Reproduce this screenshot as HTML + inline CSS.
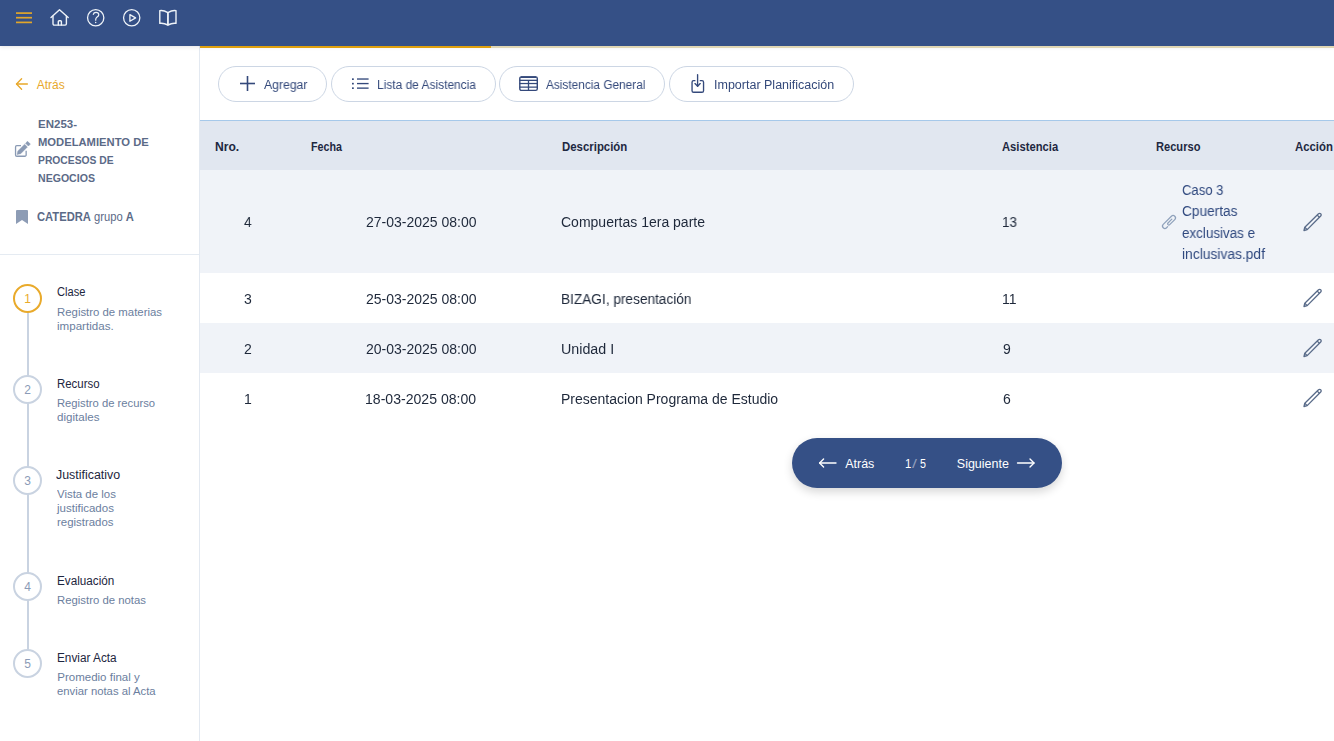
<!DOCTYPE html>
<html><head><meta charset="utf-8">
<style>
*{box-sizing:border-box;margin:0;padding:0}
html,body{width:1334px;height:741px;overflow:hidden;background:#fff;font-family:"Liberation Sans",sans-serif}
.a{position:absolute}
.t{position:absolute;white-space:nowrap;line-height:20px;font-size:12px}
#hdr{left:0;top:0;width:1334px;height:46px;background:#355086;box-shadow:0 1px 4px rgba(40,40,40,.12);z-index:2}
#side{left:0;top:46px;width:200px;height:695px;border-right:1px solid #e3e9f1;background:#fff}
.btn{position:absolute;top:66px;height:36px;border:1px solid #ccd6e4;border-radius:18px;background:#fff}
.circ{position:absolute;left:13px;width:29px;height:29px;border-radius:50%;border:2px solid #c9d3e1;background:#fff;color:#8b9bb7;font-size:12px;text-align:center;line-height:26.5px}
</style></head><body>
<!-- header -->
<div id="hdr" class="a"></div>
<div class="a" style="left:200px;top:46px;width:1134px;height:2px;background:#e0d6b3;z-index:3"></div>
<div class="a" style="left:200px;top:46px;width:291px;height:2px;background:#dfa00d;z-index:3"></div>
<svg class="a" style="left:0;top:0;z-index:4" width="200" height="46" viewBox="0 0 200 46">
  <g stroke="#e2a62a" stroke-width="1.7" fill="none">
    <line x1="16" y1="13.1" x2="32" y2="13.1"/><line x1="16" y1="17.7" x2="32" y2="17.7"/><line x1="16" y1="22.4" x2="32" y2="22.4"/>
  </g>
  <g stroke="#eef3f8" stroke-width="1.4" fill="none" stroke-linejoin="round" stroke-linecap="round">
    <path d="M51 17.6 L59.5 9.8 L68.2 17.6"/>
    <path d="M53 16.2 V23.8 a1.3 1.3 0 0 0 1.3 1.3 H65.1 a1.3 1.3 0 0 0 1.3 -1.3 V16.2"/>
    <path d="M58.3 25 V21.6 a.8 .8 0 0 1 .8 -.8 H60.6 a.8 .8 0 0 1 .8 .8 V25"/>
    <circle cx="95.7" cy="17.7" r="8.15" stroke-width="1.3"/>
    <path d="M93.3 14.4 C93.6 12.9 94.8 12.4 96 12.4 C97.6 12.4 98.8 13.4 98.8 14.8 C98.8 16.4 97.2 16.9 96.3 17.8 C95.8 18.3 95.7 19 95.7 20.2" stroke-width="1.2"/>
    <circle cx="131.7" cy="17.7" r="8.15" stroke-width="1.3"/>
    <path d="M129.9 14.6 L135.6 17.9 L129.9 21.2 Z" stroke-width="1.3"/>
    <path d="M159.8 10.6 Q163.5 10 167.9 12.6 V25 Q163.5 22.8 159.8 23.4 Z"/>
    <path d="M176 10.6 Q172.3 10 167.9 12.6 V25 Q172.3 22.8 176 23.4 Z"/>
  </g>
  <circle cx="95.7" cy="22.6" r=".75" fill="#eef3f8"/>
</svg>

<!-- sidebar -->
<div id="side" class="a"></div>
<svg class="a" style="left:14px;top:76px" width="16" height="16" viewBox="0 0 16 16"><g stroke="#e8a82a" stroke-width="1.3" fill="none" stroke-linecap="round" stroke-linejoin="round"><path d="M13.4 8 H2.5"/><path d="M7.6 2.7 L2.5 8 L7.6 13.3"/></g></svg>
<svg class="a" style="left:14px;top:141px" width="18" height="18" viewBox="0 0 18 18"><path d="M7 4.65 H2.8 a1.25 1.25 0 0 0 -1.25 1.25 V14 a1.25 1.25 0 0 0 1.25 1.25 H10.9 a1.25 1.25 0 0 0 1.25 -1.25 V9.7" fill="none" stroke="#8a9ab4" stroke-width="1.3"/><path d="M3 13.6 L3.89 9.89 L10.59 3.19 L13.41 6.01 L6.71 12.71 Z" fill="#8a9ab4" stroke="#8a9ab4" stroke-width=".4" stroke-linejoin="round"/><path d="M11.6 2.2 L13.5 0.3 L16.3 3.1 L14.4 5 Z" fill="#8a9ab4" stroke="#8a9ab4" stroke-width=".6" stroke-linejoin="round"/></svg>
<svg class="a" style="left:16px;top:210px" width="12" height="14" viewBox="0 0 12 14"><path d="M1 0 H11 a1 1 0 0 1 1 1 V14 L6 10 L0 14 V1 a1 1 0 0 1 1 -1Z" fill="#8d9cb5"/></svg>
<div class="a" style="left:0;top:254px;width:199px;height:1px;background:#e5ebf2"></div>
<div class="a" style="left:27px;top:300px;width:2px;height:360px;background:#c9d3e1"></div>
<div class="circ" style="top:283.5px;border-color:#e9aa2b;color:#e9aa2b">1</div>
<div class="circ" style="top:374.5px">2</div>
<div class="circ" style="top:466px">3</div>
<div class="circ" style="top:571.5px">4</div>
<div class="circ" style="top:649px">5</div>

<!-- toolbar -->
<div class="btn" style="left:218px;width:109px"></div>
<div class="btn" style="left:331px;width:165px"></div>
<div class="btn" style="left:499px;width:166px"></div>
<div class="btn" style="left:669px;width:185px"></div>
<svg class="a" style="left:239px;top:75px" width="17" height="17" viewBox="0 0 17 17"><g stroke="#34497b" stroke-width="1.6"><line x1="8.5" y1="1" x2="8.5" y2="16"/><line x1="1" y1="8.5" x2="16" y2="8.5"/></g></svg>
<svg class="a" style="left:351px;top:76px" width="19" height="15" viewBox="0 0 19 15"><g fill="#34497b"><rect x="1" y="2.2" width="1.8" height="1.7" rx=".5"/><rect x="1" y="6.75" width="1.8" height="1.7" rx=".5"/><rect x="1" y="11.3" width="1.8" height="1.7" rx=".5"/><rect x="6" y="2.35" width="11.6" height="1.35"/><rect x="6" y="6.9" width="11.6" height="1.35"/><rect x="6" y="11.45" width="11.6" height="1.35"/></g></svg>
<svg class="a" style="left:519px;top:76px" width="20" height="16" viewBox="0 0 20 16"><rect x="0.8" y="0.9" width="17.5" height="13.5" rx="1.6" fill="none" stroke="#34497b" stroke-width="1.4"/><g fill="#34497b"><rect x="1.8" y="0.3" width="15.4" height="1.7"/><rect x="0.5" y="3.7" width="18" height="1.3"/><rect x="0.5" y="6.9" width="18" height="1.25"/><rect x="0.5" y="10.5" width="18" height="1.25"/><rect x="8.85" y="4" width="1.3" height="10.5"/></g></svg>
<svg class="a" style="left:689px;top:73px" width="17" height="21" viewBox="0 0 17 21"><g fill="none" stroke="#34497b" stroke-width="1.35" stroke-linecap="round" stroke-linejoin="round"><path d="M5.9 7.65 H4.6 a1.55 1.55 0 0 0 -1.55 1.55 V17.7 a1.55 1.55 0 0 0 1.55 1.55 H13 a1.55 1.55 0 0 0 1.55 -1.55 V9.2 a1.55 1.55 0 0 0 -1.55 -1.55 H11.3"/><path d="M8.6 1.7 V13.2"/><path d="M6 10.6 L8.6 13.2 L11.2 10.6"/></g></svg>

<!-- table -->
<div class="a" style="left:200px;top:120px;width:1134px;height:1px;background:#a6c9ea"></div>
<div class="a" style="left:200px;top:121px;width:1134px;height:49px;background:#e1e7f0"></div>
<div class="a" style="left:200px;top:170px;width:1134px;height:103px;background:#f0f3f8"></div>
<div class="a" style="left:200px;top:323px;width:1134px;height:50px;background:#f0f3f8"></div>
<svg class="a" style="left:1159px;top:212px" width="20" height="20" viewBox="0 0 20 20"><g transform="translate(10,10) rotate(45) scale(1.18)" fill="none" stroke="#8fa1bb" stroke-width="1.05" stroke-linecap="round"><path d="M2 3.6 V4.9 A2 2 0 0 1 -2 4.9 V-4.9 A2 2 0 0 1 2 -4.9 V1.2 A1 1 0 0 1 0 1.2 V-3.4"/></g></svg>
<svg class="a" style="left:1302px;top:212px" width="21" height="20" viewBox="0 0 21 20"><g fill="none" stroke="#596b89" stroke-width="1.3" stroke-linejoin="round"><path d="M2 18.5 L2.8 15.2 L16.5 1.8 a1.5 1.5 0 0 1 2.2 0 a1.5 1.5 0 0 1 0 2.2 L5.2 17.6 Z"/><path d="M15.2 3.1 L17.4 5.3"/><path d="M2.8 15.2 L5.2 17.6"/></g></svg>
<svg class="a" style="left:1302px;top:288px" width="21" height="20" viewBox="0 0 21 20"><g fill="none" stroke="#596b89" stroke-width="1.3" stroke-linejoin="round"><path d="M2 18.5 L2.8 15.2 L16.5 1.8 a1.5 1.5 0 0 1 2.2 0 a1.5 1.5 0 0 1 0 2.2 L5.2 17.6 Z"/><path d="M15.2 3.1 L17.4 5.3"/><path d="M2.8 15.2 L5.2 17.6"/></g></svg>
<svg class="a" style="left:1302px;top:338px" width="21" height="20" viewBox="0 0 21 20"><g fill="none" stroke="#596b89" stroke-width="1.3" stroke-linejoin="round"><path d="M2 18.5 L2.8 15.2 L16.5 1.8 a1.5 1.5 0 0 1 2.2 0 a1.5 1.5 0 0 1 0 2.2 L5.2 17.6 Z"/><path d="M15.2 3.1 L17.4 5.3"/><path d="M2.8 15.2 L5.2 17.6"/></g></svg>
<svg class="a" style="left:1302px;top:388px" width="21" height="20" viewBox="0 0 21 20"><g fill="none" stroke="#596b89" stroke-width="1.3" stroke-linejoin="round"><path d="M2 18.5 L2.8 15.2 L16.5 1.8 a1.5 1.5 0 0 1 2.2 0 a1.5 1.5 0 0 1 0 2.2 L5.2 17.6 Z"/><path d="M15.2 3.1 L17.4 5.3"/><path d="M2.8 15.2 L5.2 17.6"/></g></svg>


<!-- pagination -->
<div class="a" style="left:792px;top:438px;width:270px;height:50px;border-radius:25px;background:#355086;box-shadow:0 4px 10px rgba(0,0,0,.16)"></div>
<svg class="a" style="left:818px;top:457px" width="20" height="12" viewBox="0 0 20 12"><g fill="none" stroke="#fff" stroke-width="1.35" stroke-linecap="round" stroke-linejoin="round"><path d="M18 6 H1.6"/><path d="M5.6 2 L1.6 6 L5.6 10"/></g></svg>
<svg class="a" style="left:1016px;top:457px" width="20" height="12" viewBox="0 0 20 12"><g fill="none" stroke="#fff" stroke-width="1.35" stroke-linecap="round" stroke-linejoin="round"><path d="M1.5 6 H18"/><path d="M14 2 L18 6 L14 10"/></g></svg>

<div class="t" style="left:36.70px;top:75px;font-size:12px;font-weight:400;color:#e8a82a;">Atrás</div>
<div class="t" style="left:37.90px;top:114px;font-size:11.6px;font-weight:700;color:#5b6a87;transform:scaleX(0.9923);transform-origin:0 0;">EN253-</div>
<div class="t" style="left:37.90px;top:132px;font-size:11.6px;font-weight:700;color:#5b6a87;transform:scaleX(0.9678);transform-origin:0 0;">MODELAMIENTO DE</div>
<div class="t" style="left:37.90px;top:150px;font-size:11.6px;font-weight:700;color:#5b6a87;transform:scaleX(0.8894);transform-origin:0 0;">PROCESOS DE</div>
<div class="t" style="left:37.90px;top:168px;font-size:11.6px;font-weight:700;color:#5b6a87;transform:scaleX(0.9111);transform-origin:0 0;">NEGOCIOS</div>
<div class="t" style="left:37.30px;top:207px;font-size:12px;font-weight:400;color:#5b6a87;transform:scaleX(0.9327);transform-origin:0 0;"><b>CATEDRA</b> grupo <b>A</b></div>
<div class="t" style="left:56.70px;top:282px;font-size:12px;font-weight:400;color:#1d2640;transform:scaleX(0.9258);transform-origin:0 0;">Clase</div>
<div class="t" style="left:56.60px;top:302px;font-size:11.5px;font-weight:400;color:#6b7e9e;transform:scaleX(0.9896);transform-origin:0 0;">Registro de materias</div>
<div class="t" style="left:56.60px;top:316px;font-size:11.5px;font-weight:400;color:#6b7e9e;transform:scaleX(1.0071);transform-origin:0 0;">impartidas.</div>
<div class="t" style="left:57.00px;top:374px;font-size:12px;font-weight:400;color:#1d2640;transform:scaleX(0.9533);transform-origin:0 0;">Recurso</div>
<div class="t" style="left:57.00px;top:393px;font-size:11.5px;font-weight:400;color:#6b7e9e;transform:scaleX(0.9772);transform-origin:0 0;">Registro de recurso</div>
<div class="t" style="left:57.00px;top:407px;font-size:11.5px;font-weight:400;color:#6b7e9e;transform:scaleX(1.0071);transform-origin:0 0;">digitales</div>
<div class="t" style="left:56.10px;top:465px;font-size:12px;font-weight:400;color:#1d2640;transform:scaleX(1.0339);transform-origin:0 0;">Justificativo</div>
<div class="t" style="left:56.80px;top:484px;font-size:11.5px;font-weight:400;color:#6b7e9e;transform:scaleX(0.9932);transform-origin:0 0;">Vista de los</div>
<div class="t" style="left:57.00px;top:498px;font-size:11.5px;font-weight:400;color:#6b7e9e;">justificados</div>
<div class="t" style="left:57.00px;top:512px;font-size:11.5px;font-weight:400;color:#6b7e9e;transform:scaleX(0.9930);transform-origin:0 0;">registrados</div>
<div class="t" style="left:57.10px;top:571px;font-size:12px;font-weight:400;color:#1d2640;transform:scaleX(0.9763);transform-origin:0 0;">Evaluación</div>
<div class="t" style="left:57.10px;top:590px;font-size:11.5px;font-weight:400;color:#6b7e9e;transform:scaleX(0.9867);transform-origin:0 0;">Registro de notas</div>
<div class="t" style="left:57.30px;top:648px;font-size:12px;font-weight:400;color:#1d2640;transform:scaleX(0.9820);transform-origin:0 0;">Enviar Acta</div>
<div class="t" style="left:57.30px;top:667px;font-size:11.5px;font-weight:400;color:#6b7e9e;">Promedio final y</div>
<div class="t" style="left:57.30px;top:681px;font-size:11.5px;font-weight:400;color:#6b7e9e;transform:scaleX(0.9822);transform-origin:0 0;">enviar notas al Acta</div>
<div class="t" style="left:264.00px;top:75px;font-size:12.5px;font-weight:400;color:#34497b;transform:scaleX(0.9778);transform-origin:0 0;will-change:transform;">Agregar</div>
<div class="t" style="left:377.00px;top:75px;font-size:12.5px;font-weight:400;color:#34497b;transform:scaleX(0.9558);transform-origin:0 0;will-change:transform;">Lista de Asistencia</div>
<div class="t" style="left:546.00px;top:75px;font-size:12.5px;font-weight:400;color:#34497b;transform:scaleX(0.9476);transform-origin:0 0;will-change:transform;">Asistencia General</div>
<div class="t" style="left:714.20px;top:75px;font-size:12.5px;font-weight:400;color:#34497b;will-change:transform;">Importar Planificación</div>
<div class="t" style="left:214.70px;top:137px;font-size:12.5px;font-weight:700;color:#1e2841;transform:scaleX(0.9680);transform-origin:0 0;">Nro.</div>
<div class="t" style="left:310.50px;top:137px;font-size:12.5px;font-weight:700;color:#1e2841;transform:scaleX(0.8568);transform-origin:0 0;">Fecha</div>
<div class="t" style="left:561.60px;top:137px;font-size:12.5px;font-weight:700;color:#1e2841;transform:scaleX(0.9125);transform-origin:0 0;">Descripción</div>
<div class="t" style="left:1002.40px;top:137px;font-size:12.5px;font-weight:700;color:#1e2841;transform:scaleX(0.8984);transform-origin:0 0;">Asistencia</div>
<div class="t" style="left:1155.80px;top:137px;font-size:12.5px;font-weight:700;color:#1e2841;transform:scaleX(0.8880);transform-origin:0 0;">Recurso</div>
<div class="t" style="left:1295.00px;top:137px;font-size:12.5px;font-weight:700;color:#1e2841;transform:scaleX(0.9095);transform-origin:0 0;">Acción</div>
<div class="t" style="left:243.60px;top:212px;font-size:14px;font-weight:400;color:#1e283a;transform:scaleX(0.9750);transform-origin:0 0;will-change:transform;">4</div>
<div class="t" style="left:366.00px;top:212px;font-size:14px;font-weight:400;color:#1e283a;will-change:transform;">27-03-2025 08:00</div>
<div class="t" style="left:561.30px;top:212px;font-size:14px;font-weight:400;color:#1e283a;will-change:transform;">Compuertas 1era parte</div>
<div class="t" style="left:1001.64px;top:212px;font-size:14px;font-weight:400;color:#1e283a;transform:scaleX(0.9600);transform-origin:0 0;will-change:transform;">13</div>
<div class="t" style="left:1182.00px;top:180px;font-size:14px;font-weight:400;color:#30497f;transform:scaleX(0.9341);transform-origin:0 0;will-change:transform;">Caso 3</div>
<div class="t" style="left:1182.00px;top:201px;font-size:14px;font-weight:400;color:#30497f;transform:scaleX(0.9754);transform-origin:0 0;will-change:transform;">Cpuertas</div>
<div class="t" style="left:1182.00px;top:223px;font-size:14px;font-weight:400;color:#30497f;transform:scaleX(0.9579);transform-origin:0 0;will-change:transform;">exclusivas e</div>
<div class="t" style="left:1182.00px;top:244px;font-size:14px;font-weight:400;color:#30497f;transform:scaleX(0.9871);transform-origin:0 0;will-change:transform;">inclusivas.pdf</div>
<div class="t" style="left:243.60px;top:289px;font-size:14px;font-weight:400;color:#1e283a;will-change:transform;">3</div>
<div class="t" style="left:366.00px;top:289px;font-size:14px;font-weight:400;color:#1e283a;will-change:transform;">25-03-2025 08:00</div>
<div class="t" style="left:561.30px;top:289px;font-size:14px;font-weight:400;color:#1e283a;transform:scaleX(0.9746);transform-origin:0 0;will-change:transform;">BIZAGI, presentación</div>
<div class="t" style="left:1001.60px;top:289px;font-size:14px;font-weight:400;color:#1e283a;will-change:transform;">11</div>
<div class="t" style="left:243.60px;top:339px;font-size:14px;font-weight:400;color:#1e283a;will-change:transform;">2</div>
<div class="t" style="left:366.00px;top:339px;font-size:14px;font-weight:400;color:#1e283a;will-change:transform;">20-03-2025 08:00</div>
<div class="t" style="left:561.30px;top:339px;font-size:14px;font-weight:400;color:#1e283a;transform:scaleX(1.0192);transform-origin:0 0;will-change:transform;">Unidad I</div>
<div class="t" style="left:1002.60px;top:339px;font-size:14px;font-weight:400;color:#1e283a;will-change:transform;">9</div>
<div class="t" style="left:243.50px;top:389px;font-size:14px;font-weight:400;color:#1e283a;will-change:transform;">1</div>
<div class="t" style="left:364.99px;top:389px;font-size:14px;font-weight:400;color:#1e283a;transform:scaleX(1.0055);transform-origin:0 0;will-change:transform;">18-03-2025 08:00</div>
<div class="t" style="left:561.30px;top:389px;font-size:14px;font-weight:400;color:#1e283a;will-change:transform;">Presentacion Programa de Estudio</div>
<div class="t" style="left:1002.60px;top:389px;font-size:14px;font-weight:400;color:#1e283a;will-change:transform;">6</div>
<div class="t" style="left:845.20px;top:454px;font-size:12.5px;font-weight:400;color:#ffffff;">Atrás</div>
<div class="t" style="left:904.80px;top:454px;font-size:12.5px;font-weight:400;color:#ffffff;transform:scaleX(0.9143);transform-origin:0 0;">1</div>
<div class="t" style="left:912.30px;top:454px;font-size:12.5px;font-weight:400;color:#8e9cba;transform:scaleX(1.4250);transform-origin:0 0;">/</div>
<div class="t" style="left:919.80px;top:454px;font-size:12.5px;font-weight:400;color:#ffffff;transform:scaleX(0.8571);transform-origin:0 0;">5</div>
<div class="t" style="left:956.80px;top:454px;font-size:12.5px;font-weight:400;color:#ffffff;">Siguiente</div>
</body></html>
